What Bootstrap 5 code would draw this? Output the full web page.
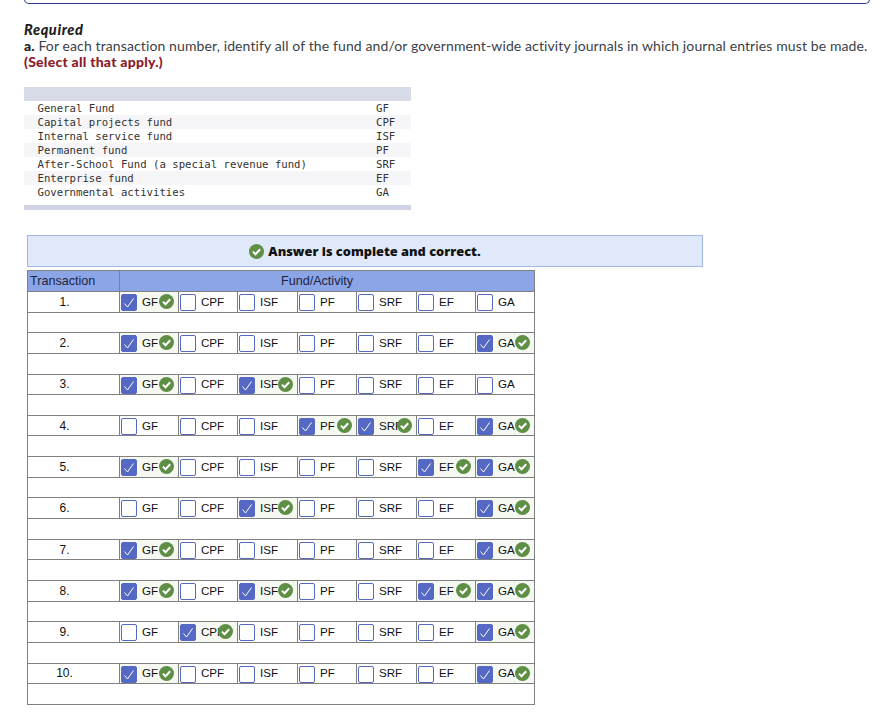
<!DOCTYPE html>
<html lang="en"><head><meta charset="utf-8"><title>Required</title>
<link href="https://cdn.jsdelivr.net/npm/bootstrap@5.3.0/dist/css/bootstrap.min.css" rel="stylesheet">
<style>
html,body{background:#fff;height:728px;overflow:hidden}
.sheet{padding:0 18px 0 24px;color:#333;font-family:Lato,"Liberation Sans",sans-serif}
.topcard{height:5px;margin-top:-1px;border:1px solid #2b3a8f;border-top:0;border-radius:0 0 6px 6px}
.req{margin-top:18px;font-size:14.5px;line-height:16px;font-weight:900;font-style:italic;letter-spacing:.6px;color:#222}
.intro{font-size:14px;line-height:16px;white-space:nowrap;letter-spacing:.115px;color:#3a3f4a}
.intro b{font-weight:900;color:#222}
.sel{font-size:14px;line-height:16px;font-weight:900;letter-spacing:.25px;color:#8c1c2c}
.codes{width:387px;margin-top:17px;font:10.67px/14px "DejaVu Sans Mono",monospace;color:#333}
.codes .band{height:14px;background:#d8dbe8}
.codes .end{height:5px;background:#d0d4e4;margin-top:6px}
.codes .ln{padding:1px 15px 0 13.5px;height:14px}
.codes .ln:nth-child(even){background:#f6f6f8}
.codes .ab{width:20px}
.banner{width:676px;height:32px;margin:25px 0 3px 3px;background:#dfe9fa;border:1px solid #a3b7e6;font:800 12.8px/30px "Open Sans",sans-serif;color:#111}
.banner svg{width:15px;height:15px}
.grid{width:508px;margin-left:3px;table-layout:fixed;border-collapse:collapse;font:11.6px/14px "Liberation Sans",sans-serif;color:#111}
.grid td,.grid th{border:1px solid #808080;padding:0;font-weight:400;position:relative;overflow:hidden;white-space:nowrap}
.grid thead th{background:#8ca5e6;height:21px;font-size:12.6px;text-align:center;color:#1a2440}
.grid thead th:first-child{text-align:left;padding-left:2px}
.grid thead th:last-child{padding-right:20px}
.grid tbody tr{height:20.65px}
.grid .num{text-align:center;font-size:12px;padding-right:18px}
.grid .gap{height:20.65px}
.opt{padding-left:22px!important}
.bx{position:absolute;left:1px;top:2px;width:16px;height:17px;border:1px solid #5568c4;border-radius:2px;background:#fff}
.hit{background:#f6f9f2}
.hit .bx{background:#5568c4}
.bx svg{display:block;width:14px;height:15px}
.ok{position:absolute;right:4px;top:2px;width:15px;height:15px}
</style></head><body>
<svg width="0" height="0" class="d-block position-absolute"><defs>
<symbol id="t" viewBox="0 0 14 15"><path d="M2.5 8.5 5.5 12 11.5 3.5" fill="none" stroke="#fff" stroke-width="1"/></symbol>
<symbol id="c" viewBox="0 0 15 15"><circle cx="7.5" cy="7.5" r="7.5" fill="#5f8f45"/><path d="M3.9 7.6 6.5 10.2 11.2 5.2" fill="none" stroke="#fff" stroke-width="2"/></symbol>
</defs></svg>
<div class="sheet">
<div class="topcard"></div>
<div class="req">Required</div>
<div class="intro"><b>a.</b> For each transaction number, identify all of the fund and/or government-wide activity journals in which journal entries must be made.</div>
<div class="sel">(Select all that apply.)</div>
<div class="codes">
<div class="band"></div>
<div>
<div class="ln d-flex justify-content-between"><span>General Fund</span><span class="ab">GF</span></div>
<div class="ln d-flex justify-content-between"><span>Capital projects fund</span><span class="ab">CPF</span></div>
<div class="ln d-flex justify-content-between"><span>Internal service fund</span><span class="ab">ISF</span></div>
<div class="ln d-flex justify-content-between"><span>Permanent fund</span><span class="ab">PF</span></div>
<div class="ln d-flex justify-content-between"><span>After-School Fund (a special revenue fund)</span><span class="ab">SRF</span></div>
<div class="ln d-flex justify-content-between"><span>Enterprise fund</span><span class="ab">EF</span></div>
<div class="ln d-flex justify-content-between"><span>Governmental activities</span><span class="ab">GA</span></div>
</div>
<div class="end"></div>
</div>
<div class="banner d-flex align-items-center justify-content-center gap-1"><svg><use href="#c"/></svg><span>Answer is complete and correct.</span></div>
<table class="grid">
<colgroup><col style="width:92px"><col style="width:59px"><col style="width:59px"><col style="width:60px"><col style="width:59px"><col style="width:60px"><col style="width:59px"><col style="width:59px"></colgroup>
<thead><tr><th>Transaction</th><th colspan="7">Fund/Activity</th></tr></thead>
<tbody>
<tr><td class="num">1.</td><td class="opt hit"><span class="bx"><svg><use href="#t"/></svg></span>GF<svg class="ok"><use href="#c"/></svg></td><td class="opt"><span class="bx"></span>CPF</td><td class="opt"><span class="bx"></span>ISF</td><td class="opt"><span class="bx"></span>PF</td><td class="opt"><span class="bx"></span>SRF</td><td class="opt"><span class="bx"></span>EF</td><td class="opt"><span class="bx"></span>GA</td></tr>
<tr><td colspan="8" class="gap"></td></tr>
<tr><td class="num">2.</td><td class="opt hit"><span class="bx"><svg><use href="#t"/></svg></span>GF<svg class="ok"><use href="#c"/></svg></td><td class="opt"><span class="bx"></span>CPF</td><td class="opt"><span class="bx"></span>ISF</td><td class="opt"><span class="bx"></span>PF</td><td class="opt"><span class="bx"></span>SRF</td><td class="opt"><span class="bx"></span>EF</td><td class="opt hit"><span class="bx"><svg><use href="#t"/></svg></span>GA<svg class="ok"><use href="#c"/></svg></td></tr>
<tr><td colspan="8" class="gap"></td></tr>
<tr><td class="num">3.</td><td class="opt hit"><span class="bx"><svg><use href="#t"/></svg></span>GF<svg class="ok"><use href="#c"/></svg></td><td class="opt"><span class="bx"></span>CPF</td><td class="opt hit"><span class="bx"><svg><use href="#t"/></svg></span>ISF<svg class="ok"><use href="#c"/></svg></td><td class="opt"><span class="bx"></span>PF</td><td class="opt"><span class="bx"></span>SRF</td><td class="opt"><span class="bx"></span>EF</td><td class="opt"><span class="bx"></span>GA</td></tr>
<tr><td colspan="8" class="gap"></td></tr>
<tr><td class="num">4.</td><td class="opt"><span class="bx"></span>GF</td><td class="opt"><span class="bx"></span>CPF</td><td class="opt"><span class="bx"></span>ISF</td><td class="opt hit"><span class="bx"><svg><use href="#t"/></svg></span>PF<svg class="ok"><use href="#c"/></svg></td><td class="opt hit"><span class="bx"><svg><use href="#t"/></svg></span>SRF<svg class="ok"><use href="#c"/></svg></td><td class="opt"><span class="bx"></span>EF</td><td class="opt hit"><span class="bx"><svg><use href="#t"/></svg></span>GA<svg class="ok"><use href="#c"/></svg></td></tr>
<tr><td colspan="8" class="gap"></td></tr>
<tr><td class="num">5.</td><td class="opt hit"><span class="bx"><svg><use href="#t"/></svg></span>GF<svg class="ok"><use href="#c"/></svg></td><td class="opt"><span class="bx"></span>CPF</td><td class="opt"><span class="bx"></span>ISF</td><td class="opt"><span class="bx"></span>PF</td><td class="opt"><span class="bx"></span>SRF</td><td class="opt hit"><span class="bx"><svg><use href="#t"/></svg></span>EF<svg class="ok"><use href="#c"/></svg></td><td class="opt hit"><span class="bx"><svg><use href="#t"/></svg></span>GA<svg class="ok"><use href="#c"/></svg></td></tr>
<tr><td colspan="8" class="gap"></td></tr>
<tr><td class="num">6.</td><td class="opt"><span class="bx"></span>GF</td><td class="opt"><span class="bx"></span>CPF</td><td class="opt hit"><span class="bx"><svg><use href="#t"/></svg></span>ISF<svg class="ok"><use href="#c"/></svg></td><td class="opt"><span class="bx"></span>PF</td><td class="opt"><span class="bx"></span>SRF</td><td class="opt"><span class="bx"></span>EF</td><td class="opt hit"><span class="bx"><svg><use href="#t"/></svg></span>GA<svg class="ok"><use href="#c"/></svg></td></tr>
<tr><td colspan="8" class="gap"></td></tr>
<tr><td class="num">7.</td><td class="opt hit"><span class="bx"><svg><use href="#t"/></svg></span>GF<svg class="ok"><use href="#c"/></svg></td><td class="opt"><span class="bx"></span>CPF</td><td class="opt"><span class="bx"></span>ISF</td><td class="opt"><span class="bx"></span>PF</td><td class="opt"><span class="bx"></span>SRF</td><td class="opt"><span class="bx"></span>EF</td><td class="opt hit"><span class="bx"><svg><use href="#t"/></svg></span>GA<svg class="ok"><use href="#c"/></svg></td></tr>
<tr><td colspan="8" class="gap"></td></tr>
<tr><td class="num">8.</td><td class="opt hit"><span class="bx"><svg><use href="#t"/></svg></span>GF<svg class="ok"><use href="#c"/></svg></td><td class="opt"><span class="bx"></span>CPF</td><td class="opt hit"><span class="bx"><svg><use href="#t"/></svg></span>ISF<svg class="ok"><use href="#c"/></svg></td><td class="opt"><span class="bx"></span>PF</td><td class="opt"><span class="bx"></span>SRF</td><td class="opt hit"><span class="bx"><svg><use href="#t"/></svg></span>EF<svg class="ok"><use href="#c"/></svg></td><td class="opt hit"><span class="bx"><svg><use href="#t"/></svg></span>GA<svg class="ok"><use href="#c"/></svg></td></tr>
<tr><td colspan="8" class="gap"></td></tr>
<tr><td class="num">9.</td><td class="opt"><span class="bx"></span>GF</td><td class="opt hit"><span class="bx"><svg><use href="#t"/></svg></span>CPF<svg class="ok"><use href="#c"/></svg></td><td class="opt"><span class="bx"></span>ISF</td><td class="opt"><span class="bx"></span>PF</td><td class="opt"><span class="bx"></span>SRF</td><td class="opt"><span class="bx"></span>EF</td><td class="opt hit"><span class="bx"><svg><use href="#t"/></svg></span>GA<svg class="ok"><use href="#c"/></svg></td></tr>
<tr><td colspan="8" class="gap"></td></tr>
<tr><td class="num">10.</td><td class="opt hit"><span class="bx"><svg><use href="#t"/></svg></span>GF<svg class="ok"><use href="#c"/></svg></td><td class="opt"><span class="bx"></span>CPF</td><td class="opt"><span class="bx"></span>ISF</td><td class="opt"><span class="bx"></span>PF</td><td class="opt"><span class="bx"></span>SRF</td><td class="opt"><span class="bx"></span>EF</td><td class="opt hit"><span class="bx"><svg><use href="#t"/></svg></span>GA<svg class="ok"><use href="#c"/></svg></td></tr>
<tr><td colspan="8" class="gap"></td></tr>
</tbody></table>
</div>
<script src="https://cdn.jsdelivr.net/npm/bootstrap@5.3.0/dist/js/bootstrap.bundle.min.js"></script>
</body></html>
